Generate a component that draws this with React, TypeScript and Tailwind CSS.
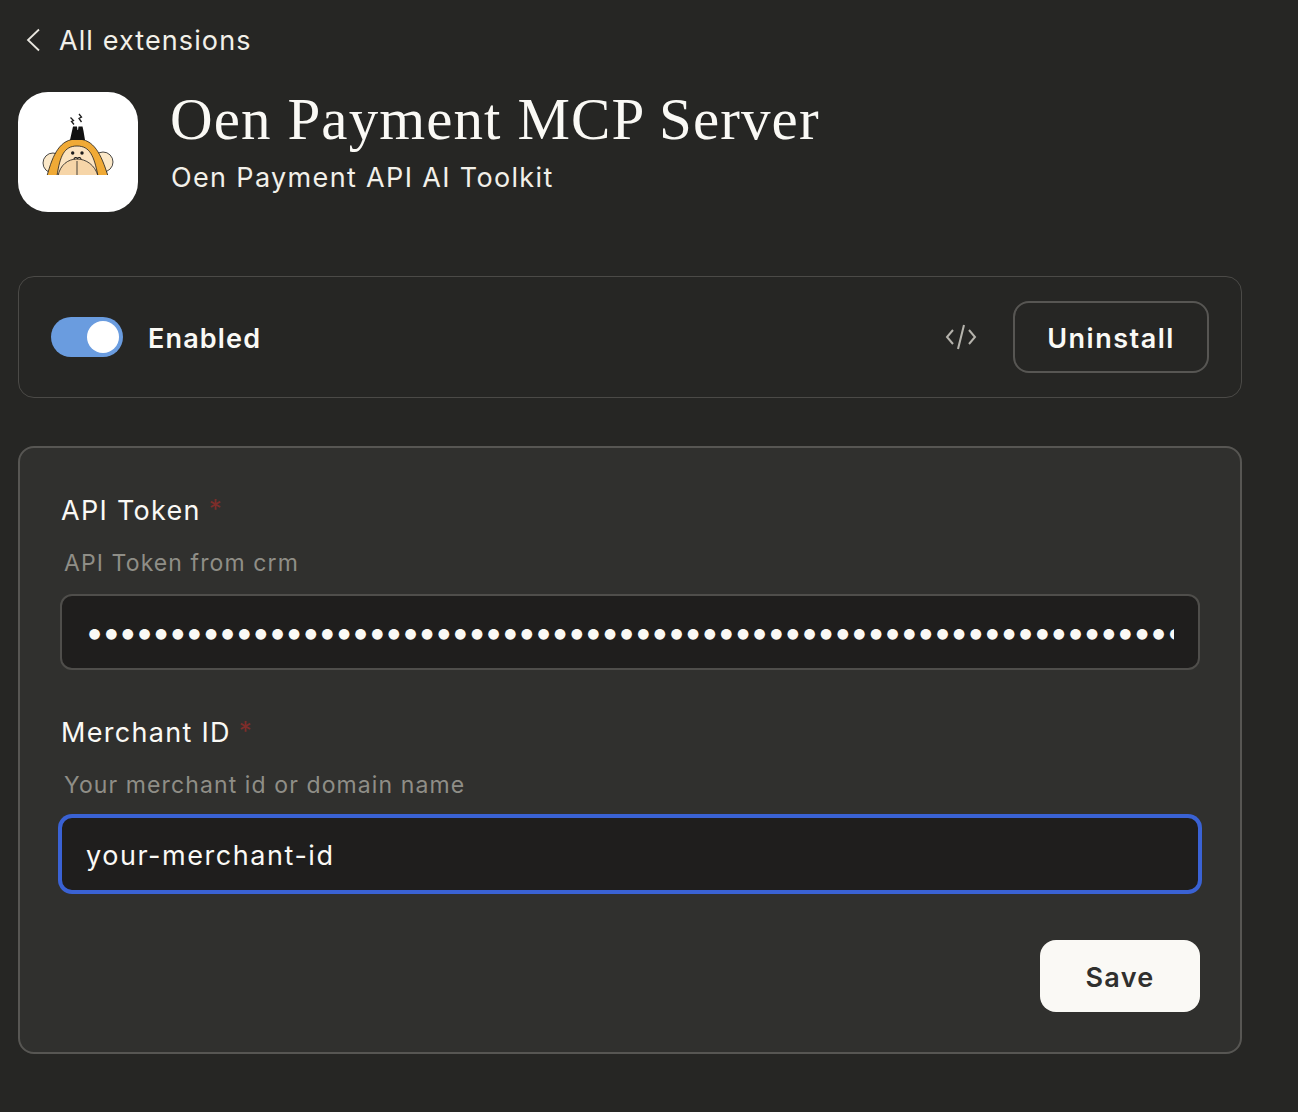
function MascotLogo() {
  return (
    <svg viewBox="18 92 120 120" className="h-[120px] w-[120px]">
      <defs>
        <clipPath id="mascot-clip">
          <rect x="30" y="105" width="90" height="70" />
        </clipPath>
      </defs>
      <g clipPath="url(#mascot-clip)" stroke="#1c1c1c" strokeWidth="0.8">
        <circle cx="53" cy="163" r="10" fill="#fbe8c8" />
        <circle cx="103" cy="162" r="10" fill="#fbe8c8" />
        <path d="M47 176C53 154 60 139 77 139C94 139 101 154 108 176Z" fill="#f0aa36" />
        <path d="M57 176C60 156 64 146 77 146C90 146 94 156 98 176Z" fill="#fbe3c0" />
        <path d="M58 176C60 165 68 159 77 159C86 159 95 165 98 176Z" fill="#f6d5a8" />
        <path d="M77 161V176" fill="none" />
      </g>
      <path d="M70 140L72 131L73 126.5H77L77.5 130H78L78.5 126.5H82.5L83.5 131L85 140Z" fill="#111" />
      <path d="M70.5 117.5L73.5 120.5L71.5 121.5L74 124.5M79 114L81.5 117L79 118.5L81.5 122" fill="none" stroke="#1c1c1c" strokeWidth="1.3" />
      <circle cx="72.7" cy="153" r="1.7" fill="#1c1c1c" />
      <circle cx="82" cy="153" r="1.7" fill="#1c1c1c" />
      <path d="M74 159.5C74 157 76.5 157 77.5 158.5C78.5 157 81 157 81 159.5" fill="none" stroke="#1c1c1c" strokeWidth="1.1" />
    </svg>
  );
}

function CodeGlyph() {
  return (
    <svg viewBox="0 0 32 26" className="h-[26px] w-[32px]" fill="none" stroke="#b5b3ac" strokeWidth="2">
      <path d="M8 6L2 13L8 20" />
      <path d="M24 6L30 13L24 20" />
      <path d="M19 1L13 25" />
    </svg>
  );
}

function Field({ label, hint, children }: { label: string; hint: string; children: React.ReactNode }) {
  return (
    <div>
      <div className="flex h-[36px] items-center pt-[2px] pl-px">
        <span className="text-[27px] leading-[36px] tracking-[1.3px] text-[#faf9f5]">{label}</span>
        <span className="relative -top-[2px] ml-[8px] text-[26px] leading-[36px] text-[#7d2d2a]">*</span>
      </div>
      <p className="mt-[18px] h-[32px] pt-[1px] pl-[4px] text-[23px] leading-[32px] tracking-[1.1px] text-[#8f8e87]">{hint}</p>
      <div className="mt-[16px]">{children}</div>
    </div>
  );
}

export default function App() {
  return (
    <div className="h-[1112px] overflow-hidden bg-[#262624] pr-[56px] pl-[18px] font-['Inter',sans-serif]">
      <div className="flex h-[80px] items-center pl-[8px]">
        <svg viewBox="0 0 14 24" className="h-[24px] w-[14px]" fill="none" stroke="#e8e6df" strokeWidth="1.8">
          <path d="M13 1.5L2 12L13 22.5" />
        </svg>
        <span className="ml-[19px] pt-[2px] text-[27px] tracking-[1.1px] text-[#f2f0e9]">All extensions</span>
      </div>

      <div className="mt-[12px] flex items-start gap-[33px]">
        <div className="flex h-[120px] w-[120px] shrink-0 overflow-hidden rounded-[30px] bg-white">
          <MascotLogo />
        </div>
        <div>
          <h1 className="-mt-px -ml-px font-['Liberation_Serif',serif] text-[59px] leading-[56px] tracking-[1.1px] text-[#faf9f5]">Oen Payment MCP Server</h1>
          <p className="mt-[11px] text-[27px] leading-[40px] tracking-[1.35px] text-[#f2f0e9]">Oen Payment API AI Toolkit</p>
        </div>
      </div>

      <div className="mt-[64px] flex h-[122px] items-center rounded-[16px] border border-[#4b4a47] px-[32px]">
        <div className="flex h-[40px] w-[72px] items-center justify-end rounded-full bg-[#6a9cdf] pr-[4px]">
          <div className="h-[32px] w-[32px] rounded-full bg-white" />
        </div>
        <span className="ml-[25px] pt-[5px] text-[27px] font-semibold tracking-[1.15px] text-[#faf9f5]">Enabled</span>
        <div className="mr-[36px] ml-auto">
          <CodeGlyph />
        </div>
        <button className="h-[72px] w-[196px] rounded-[16px] border-2 border-[#575653] pt-[5px] text-[27px] font-semibold tracking-[1.5px] text-[#faf9f5]">
          Uninstall
        </button>
      </div>

      <div className="mt-[48px] h-[608px] rounded-[16px] border-2 border-[#575653] bg-[#30302e] px-[40px] pt-[44px]">
        <Field label="API Token" hint="API Token from crm">
          <input
            type="password"
            readOnly
            value={'x'.repeat(90)}
            className="h-[76px] w-full rounded-[12px] border-2 border-[#4f4e4b] bg-[#1f1e1d] pr-[24px] pb-[2px] pl-[23px] text-[34px] tracking-[-2.5px] text-[#faf9f5] outline-none"
          />
        </Field>
        <div className="mt-[44px]">
          <Field label="Merchant ID" hint="Your merchant id or domain name">
            <input
              readOnly
              value="your-merchant-id"
              className="h-[76px] w-full rounded-[12px] border-2 border-[#3a62d4] bg-[#1f1e1d] px-[24px] pt-[2px] text-[27px] tracking-[1.55px] text-[#faf9f5] ring-2 ring-[#3a62d4] outline-none"
            />
          </Field>
        </div>
        <div className="mt-[48px] flex justify-end">
          <button className="h-[72px] w-[160px] rounded-[16px] bg-[#faf9f5] pt-[5px] text-[27px] font-semibold tracking-[1.3px] text-[#30302e]">
            Save
          </button>
        </div>
      </div>
    </div>
  );
}
